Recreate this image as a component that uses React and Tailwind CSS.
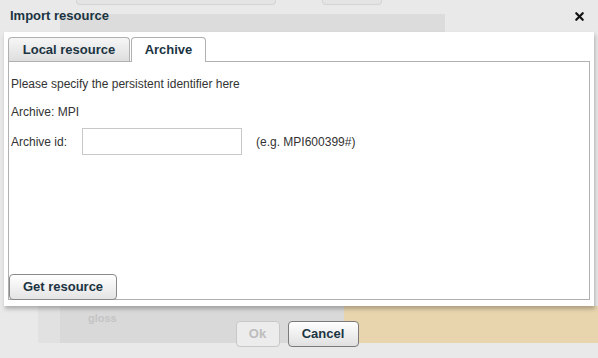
import { X } from "lucide-react";

function GhostPage() {
  // faded page behind the modal
  return (
    <div className="flex h-full w-full flex-col bg-[#e9e9e9]">
      <div className="flex h-[6px] gap-[46px] pl-[76px]">
        <div className="h-[5px] w-[200px] rounded-b-[4px] border border-t-0 border-[#d4d4d4] bg-[#e4e4e4]" />
        <div className="h-[5px] w-[60px] rounded-b-[4px] border border-t-0 border-[#d4d4d4] bg-[#e4e4e4]" />
      </div>
      <div className="mt-[8px] ml-[60px] h-[18px] w-[385px] bg-[#dcdcdc]" />
      <div className="flex-1" />
      <div className="flex h-[37px] pl-[38px]">
        <div className="w-[22px] bg-[#e1e1e1]" />
        <div className="w-[284px] bg-[#d9d9d9] pl-[28px] pt-[4px] text-[11px] font-bold text-[#c4c4c4] [font-family:'Liberation_Sans',Arial,sans-serif]">
          gloss
        </div>
        <div className="flex-1 bg-[#e8d5ae]" />
      </div>
      <div className="h-[15px]" />
    </div>
  );
}

export default function App() {
  return (
    <div className="relative h-[358px] w-[598px] overflow-hidden [font-family:'Liberation_Sans',Arial,sans-serif]">
      <GhostPage />
      <div className="absolute inset-0 flex flex-col">
        <div className="flex h-[32px] items-center justify-between pl-[10px] pr-[12px]">
          <span className="text-[13px] font-bold text-[#1b3442]">Import resource</span>
          <X className="h-[13px] w-[13px] text-[#111]" strokeWidth={4} />
        </div>
        <div className="mx-[4px] flex h-[274px] flex-col bg-white px-[4px] pt-[5px] pb-[6px] shadow-[1px_3px_4px_rgba(0,0,0,0.25)]">
          <div className="flex h-[24px] items-end gap-[1px]">
            <div className="flex h-[24px] w-[122px] items-center justify-center rounded-t-[4px] border border-b-0 border-[#b0b0b0] bg-gradient-to-b from-[#f6f6f6] to-[#dedede] text-[13px] font-bold text-[#1b3442]">
              Local resource
            </div>
            <div className="relative z-10 -mb-px flex h-[25px] w-[75px] items-center justify-center rounded-t-[4px] border border-b-0 border-[#b0b0b0] bg-white text-[13px] font-bold text-[#1b3442]">
              Archive
            </div>
          </div>
          <div className="flex flex-1 flex-col border border-[#b0b0b0] text-[12px] text-[#333]">
            <div className="flex flex-col px-[2px] pt-[15px]">
              <div className="h-[14px] leading-[14px]">Please specify the persistent identifier here</div>
              <div className="mt-[14px] h-[14px] leading-[14px]">Archive: MPI</div>
              <div className="mt-[9px] flex items-center">
                <span className="w-[71px]">Archive id:</span>
                <input className="h-[27px] w-[160px] border border-[#c8c8c8] bg-white outline-none" />
                <span className="ml-[14px]">(e.g. MPI600399#)</span>
              </div>
            </div>
            <div className="flex-1" />
            <button className="-mb-px ml-0 h-[26px] w-[108px] rounded-[4px] border border-[#8a8a8a] bg-gradient-to-b from-white to-[#e4e4e4] text-[13px] font-bold text-[#1b3442]">
              Get resource
            </button>
          </div>
        </div>
        <div className="flex flex-1 items-center justify-center gap-[8px] pr-[4px] pt-[4px]">
          <button className="h-[26px] w-[44px] rounded-[4px] border border-[#c8c8c8] bg-[#ececec] text-[13px] font-bold text-[#bdbdbd]">
            Ok
          </button>
          <button className="h-[26px] w-[71px] rounded-[4px] border border-[#7a7a7a] bg-gradient-to-b from-white to-[#e0e0e0] text-[13px] font-bold text-[#1b3442]">
            Cancel
          </button>
        </div>
      </div>
    </div>
  );
}
